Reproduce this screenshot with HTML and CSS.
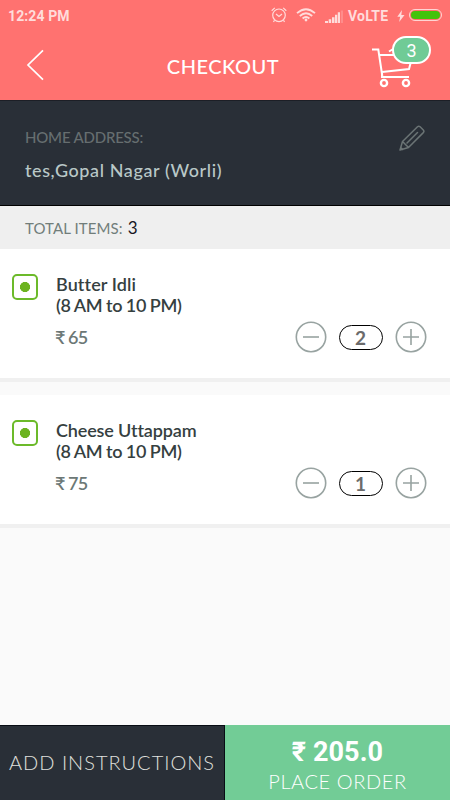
FILE: index.html
```
<!DOCTYPE html>
<html lang="en">
<head>
<meta charset="utf-8">
<title>Checkout</title>
<link rel="stylesheet" href="styles.css">
</head>
<body>
<div class="app">
  <header class="header">
    <div class="status">
      <span class="clock">12:24 PM</span>
      <svg class="alarm" width="16" height="16" viewBox="0 0 16 16" fill="none" stroke="currentColor" stroke-width="1.2"><circle cx="8" cy="8.3" r="6.3"/><path d="M5 7l3 2.5L11 7M.7 3.8L3.8.9M15.3 3.8L12.2.9M3.5 13.2L2.5 15M12.5 13.2l1 1.8"/></svg>
      <svg class="wifi" width="20" height="14" viewBox="0 0 20 14" fill="none" stroke="currentColor" stroke-width="1.8"><path d="M1 5.2Q10-2.8 19 5.2M3.8 8Q10 2.4 16.2 8M6.6 10.5Q10 7.4 13.4 10.5"/><circle cx="10" cy="12" r="1.4" fill="currentColor" stroke="none"/></svg>
      <svg class="signal" width="18" height="13" viewBox="0 0 18 13" fill="currentColor"><path d="M0 11h3v2H0zM3.700 9.300h2.500V13H3.700zM7 7.200h2.500V13H7zM10 4.800h2.200V13H10zM12.800 2.300H15V13h-2.200z"/><path d="M15.800.5H18V13h-2.200z" opacity=".25"/></svg>
      <span class="volte">VoLTE</span>
      <svg class="bolt" width="8" height="12" viewBox="0 0 8 12" fill="currentColor"><path d="M5 0L.3 6.8h2.800L2.200 12l5.300-7H4.300z"/></svg>
      <span class="battery"></span>
    </div>
    <div class="nav">
      <svg class="back" width="18" height="32" viewBox="0 0 18 32" fill="none" stroke="#fff" stroke-width="1.7"><path d="M17 1.300L2 16l15 14.700"/></svg>
      <h1 class="title">CHECKOUT</h1>
      <div class="cart">
        <svg width="42" height="42" viewBox="0 0 42 42" fill="none" stroke="#fff" stroke-width="2"><path d="M0 2.500h6.300L10.300 29M7.500 8H36M10 25L37 22l4-15M10 24v6h27M17 4.500l5-3"/><circle cx="12" cy="36" r="3.100" stroke-width="2.400"/><circle cx="34" cy="36" r="3.100" stroke-width="2.400"/></svg>
        <span class="badge">3</span>
      </div>
    </div>
  </header>
  <section class="address">
    <div>
      <div class="address-label">HOME ADDRESS:</div>
      <div class="address-text">tes,Gopal Nagar (Worli)</div>
    </div>
    <svg class="pencil" width="26" height="26" viewBox="0 0 26 26" fill="none" stroke="#6b7475" stroke-width="1.500" stroke-linejoin="round" stroke-linecap="round"><path d="M1 25l2.500-8.500L18.500 1.800q1.300-1.200 2.600 0l3.200 3.200q1.200 1.300 0 2.600L9.500 22.500zM3.500 16.500l6 6M1.800 22.500l2 2M18.500 7.500L8 18"/></svg>
  </section>
  <div class="total"><span class="total-label">TOTAL ITEMS:</span><span class="total-count">3</span></div>
  <main class="items">
    <article class="item">
      <span class="veg"></span>
      <div class="info">
        <div class="name">Butter Idli</div>
        <div class="hours">(8 AM to 10 PM)</div>
        <div class="row">
          <span class="price">₹ 65</span>
          <div class="stepper">
            <svg width="32" height="32" viewBox="0 0 32 32" fill="none" stroke="#98a3a1" stroke-width="1.600"><circle cx="16" cy="16" r="14.700"/><path d="M8 16h16"/></svg>
            <span class="qty">2</span>
            <svg width="32" height="32" viewBox="0 0 32 32" fill="none" stroke="#98a3a1" stroke-width="1.600"><circle cx="16" cy="16" r="14.700"/><path d="M8 16h16M16 8v16"/></svg>
          </div>
        </div>
      </div>
    </article>
    <article class="item">
      <span class="veg"></span>
      <div class="info">
        <div class="name name-long">Cheese Uttappam</div>
        <div class="hours">(8 AM to 10 PM)</div>
        <div class="row">
          <span class="price">₹ 75</span>
          <div class="stepper">
            <svg width="32" height="32" viewBox="0 0 32 32" fill="none" stroke="#98a3a1" stroke-width="1.600"><circle cx="16" cy="16" r="14.700"/><path d="M8 16h16"/></svg>
            <span class="qty">1</span>
            <svg width="32" height="32" viewBox="0 0 32 32" fill="none" stroke="#98a3a1" stroke-width="1.600"><circle cx="16" cy="16" r="14.700"/><path d="M8 16h16M16 8v16"/></svg>
          </div>
        </div>
      </div>
    </article>
  </main>
  <footer class="actions">
    <div class="instructions">ADD INSTRUCTIONS</div>
    <div class="order">
      <div class="amount">₹ 205.0</div>
      <div class="place">PLACE ORDER</div>
    </div>
  </footer>
</div>
</body>
</html>
```
FILE: styles.css
```
* { box-sizing: border-box; }
body { margin: 0; background: #fafafa; font-family: Lato, "Noto Sans", sans-serif; }
.app { width: 450px; height: 800px; display: flex; flex-direction: column; overflow: hidden; white-space: nowrap; }

.header { height: 100px; flex: none; background: #ff7270; color: #fff; }
.status { height: 32px; display: flex; align-items: center; padding: 0 8px; color: #ffdcdb; font: 700 14px/31px Roboto, sans-serif; }
.clock { flex: 1; letter-spacing: .1px; }
.alarm { margin-right: 9px; margin-top: -2px; }
.wifi { margin-right: 9px; margin-top: -2px; }
.signal { margin-right: 5px; }
.volte { margin-right: 7px; width: 42px; letter-spacing: .2px; }
.bolt { margin-right: 4px; margin-top: -1px; }
.battery { width: 33px; height: 12px; margin-top: -2px; border: 1px solid #ffd5d3; border-radius: 6px; background: #43c30b; background-clip: content-box; padding: 1px; overflow: hidden; }
.nav { height: 67px; display: flex; align-items: center; justify-content: space-between; padding: 0 36px 0 26px; }
.back { margin-top: -1px; }
.title { margin: 1px 0 0 30px; font-size: 20px; line-height: 24px; font-weight: 500; letter-spacing: .5px; }
.cart { position: relative; width: 42px; height: 42px; margin-top: 4px; }
.badge { position: absolute; left: 20px; top: -11px; width: 39px; height: 28px; border: 2px solid #fff; border-radius: 14px; background: #70cb96; font: 400 18px/25px Roboto, sans-serif; text-align: center; }

.address { height: 106px; flex: none; background: #292f37; border-top: 1px solid #1c1f26; border-bottom: 1px solid #000; padding: 24px 25px 0; display: flex; justify-content: space-between; }
.address-label { font-size: 15px; line-height: 24px; color: #666e70; letter-spacing: -.2px; font-weight: 500; }
.address-text { margin-top: 9px; font-size: 18px; line-height: 24px; color: #b9c8c7; letter-spacing: .6px; font-weight: 500; }
.total { height: 43px; flex: none; background: #efefef; padding: 0 25px; line-height: 43px; font-size: 15px; color: #717d7a; }
.total-label { letter-spacing: .1px; }
.total-count { margin-left: 5px; font-size: 17px; color: #17171f; }

.items { flex: 1; display: flex; flex-direction: column; gap: 13px; }
.item { height: 133px; background: #fff; border-bottom: 4px solid #f0f0f0; padding: 25px 23px 0 12px; display: flex; }
.veg { width: 26px; height: 26px; flex: none; border: 2px solid #6cba2a; border-radius: 5px; background: radial-gradient(circle, #6cb320 4.800px, transparent 5.300px); margin-right: 18px; }
.info { flex: 1; color: #35403f; font-size: 18px; line-height: 21px; font-weight: 600; }
.name { letter-spacing: .1px; }
.name-long { letter-spacing: -.15px; }
.hours { letter-spacing: -.35px; word-spacing: -.4px; }
.row { display: flex; align-items: center; justify-content: space-between; margin-top: 5px; }
.price { color: #6c7876; margin-left: -1px; letter-spacing: -.9px; }
.stepper { display: flex; align-items: center; gap: 12px; margin-right: .5px; }
.qty { width: 44px; height: 25px; border: 1px solid #000; border-radius: 13px; line-height: 24px; text-align: center; font-size: 19px; font-weight: 700; color: #6b6b6b; }

.actions { height: 75px; flex: none; display: flex; }
.instructions { width: 225px; background: #292f37; border: 1px solid #080c14; border-width: 1px 1px 0 0; color: #e0e1df; text-align: center; font-size: 20px; line-height: 73px; font-weight: 300; letter-spacing: 1px; }
.order { width: 225px; background: #72cc96; color: #fff; text-align: center; }
.amount { font: 700 27px/30px Roboto, sans-serif; margin-top: 12px; letter-spacing: .1px; }
.place { font-size: 20px; line-height: 24px; font-weight: 300; margin-top: 2px; letter-spacing: .6px; }
```
